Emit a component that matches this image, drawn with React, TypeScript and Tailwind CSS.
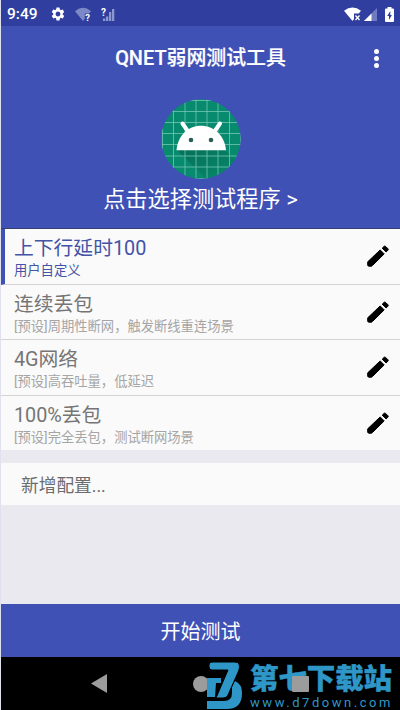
import { MdSettings } from 'react-icons/md';

const profiles = [
  { id: 1, title: '上下行延时100', desc: '用户自定义', active: true },
  { id: 2, title: '连续丢包', desc: '[预设]周期性断网，触发断线重连场景', active: false },
  { id: 3, title: '4G网络', desc: '[预设]高吞吐量，低延迟', active: false },
  { id: 4, title: '100%丢包', desc: '[预设]完全丢包，测试断网场景', active: false },
];

function StatusBar() {
  return (
    <div className="flex h-[26px] shrink-0 items-center bg-[#303f9f] pl-[6px] pr-[6px] pt-[2px] text-white">
      <span className="w-[43px] pt-px text-[15.5px] font-medium leading-none">9:49</span>
      <MdSettings className="h-4 w-4" />
      {/* wifi, unknown */}
      <svg className="ml-[9px] h-[15px] w-4" viewBox="0 0 16 15">
        <path d="M0 4.2Q8-2.6 16 4.2L14 6.5H9.8V11.8L8 14Z" fill="#7d88c6" />
        <text x="10.2" y="14" fontSize="9.5" fontWeight="700" fill="#fff">?</text>
      </svg>
      {/* signal, unknown */}
      <svg className="ml-[10px] h-[15px] w-[14px]" viewBox="0 0 14 15">
        <path d="M2 11.5h2.3v2.5H2zM5 9.5h2.3V14H5zM8 5h2.3v9H8zM11 2h2.3V14H11z" fill="#8c96cf" />
        <text x="0" y="9" fontSize="10" fontWeight="700" fill="#fff">?</text>
      </svg>
      <div className="flex-1" />
      <svg className="h-[15px] w-[17px]" viewBox="0 0 17 15">
        <path d="M0 3.8Q8.5-2.8 17 3.8L14.8 6.6H10V12L8.5 14Z" fill="#fff" />
        <path d="M11.5 8.5l4 4.5M15.5 8.5l-4 4.5" stroke="#fff" strokeWidth="1.3" />
      </svg>
      <svg className="ml-[3px] h-[13px] w-[13px]" viewBox="0 0 13 13">
        <path d="M13 0V13H0Z" fill="#6f7bc0" />
        <path d="M7.5 5.5V13H0Z" fill="#fff" />
      </svg>
      <svg className="ml-[8px] h-[15px] w-[9px]" viewBox="0 0 9 15">
        <path d="M2.5 0h4v1.5H8a1 1 0 0 1 1 1V14a1 1 0 0 1-1 1H1a1 1 0 0 1-1-1V2.5a1 1 0 0 1 1-1h1.5Z" fill="#fff" />
        <path d="M5.3 4L2.2 9H4v4l2.9-5H5.3Z" fill="#303f9f" />
      </svg>
    </div>
  );
}

function AppIcon() {
  return (
    <svg className="h-20 w-20" viewBox="0 0 80 80">
      <defs>
        <clipPath id="circle">
          <circle cx="40" cy="40" r="39.7" />
        </clipPath>
        <linearGradient id="shade" x1="0" y1="0" x2="1" y2="1">
          <stop offset="0" stopColor="#000" stopOpacity="0.2" />
          <stop offset="1" stopColor="#000" stopOpacity="0" />
        </linearGradient>
      </defs>
      <g clipPath="url(#circle)">
        <rect width="80" height="80" fill="#078a6d" />
        <path d="M16 51H64L76 63V80H45Z" fill="url(#shade)" />
        <path
          d="M1.5 0V80M12.5 0V80M24 0V80M35 0V80M46 0V80M57 0V80M68.5 0V80M79.5 0V80M0 1.5H80M0 12.5H80M0 23.5H80M0 34.5H80M0 45.5H80M0 57H80M0 68H80M0 79.5H80"
          stroke="#72c6b4"
          strokeWidth="0.8"
        />
      </g>
      <path d="M21.5 24.5L27 32.5M59 24.5L53.5 32.5" stroke="#fff" strokeWidth="4" strokeLinecap="round" />
      <path d="M15.5 51.3C16.8 36.5 27 26.8 40 26.8S63.7 36.5 65 51.3Z" fill="#fff" />
      <circle cx="30" cy="41" r="2.3" fill="#2c5e58" />
      <circle cx="50" cy="41" r="2.3" fill="#2c5e58" />
    </svg>
  );
}

function EditIcon() {
  return (
    <svg className="h-[22px] w-[22px]" viewBox="0 0 22 22">
      <path
        d="M.7 20.3V16.8L13.2 4.9L17.2 8.9L5.7 20.3L4.5 21.2H1.5ZM15.2 3.2L17 1.4Q17.8.7 18.6 1.4L21 3.8Q21.6 4.4 21 5.1L19.1 7Z"
        fill="#000"
        stroke="#000"
        strokeWidth="1"
        strokeLinejoin="round"
      />
    </svg>
  );
}

function Watermark() {
  return (
    <div className="absolute left-[206px] top-[4px] flex text-[#2e97c8]">
      <svg className="h-[49px] w-[36px]" viewBox="0 0 36 49">
        <path d="M0 17H14V22H9L8 36H0Z" fill="currentColor" />
        <path d="M28 20Q35 23 35 32Q35 48 20 48H0V40H17Q25 40 25 32V26Z" fill="currentColor" />
        <path d="M5 1H28Q34 1 32 9L21 34Q20 37 16 37H9L21 9H5Q2 9 2 6V4Q2 1 5 1Z" fill="currentColor" stroke="#000" strokeWidth="1" />
      </svg>
      <div className="pl-[7px] pt-[4px]">
        <p className="whitespace-nowrap text-[28.5px] font-black leading-[30px] tracking-[-0.1px] [-webkit-text-stroke:0.4px_currentColor]">第七下载站</p>
        <p className="whitespace-nowrap text-[13px] leading-[15px] tracking-[2.55px]">www.d7down.com</p>
      </div>
    </div>
  );
}

export default function App() {
  return (
    <div className="flex h-[710px] w-[400px] flex-col overflow-hidden border-l border-[#dfe1ee] bg-[#e9e9ef] font-[Roboto,'Noto_Sans_CJK_SC',sans-serif]">
      <StatusBar />

      <header className="flex h-[203px] shrink-0 flex-col items-center border-b border-[#37406f] bg-[#3f51b5] text-white">
        <div className="relative flex h-[64px] w-full items-center justify-center">
          <h1 className="pt-[2px] text-[19.9px] font-medium [-webkit-text-stroke:0.2px_currentColor]">QNET弱网测试工具</h1>
          <div className="absolute right-[21px] flex flex-col gap-[2px]">
            <span className="h-[5px] w-[5px] rounded-full bg-white" />
            <span className="h-[5px] w-[5px] rounded-full bg-white" />
            <span className="h-[5px] w-[5px] rounded-full bg-white" />
          </div>
        </div>
        <div className="mt-[9px]">
          <AppIcon />
        </div>
        <p className="mt-[4px] text-[22.2px] leading-[32px]">点击选择测试程序 &gt;</p>
      </header>

      <ul className="shrink-0 bg-[#fafafa]">
        {profiles.map((profile) => (
          <li
            key={profile.id}
            className={
              profile.active
                ? 'flex h-[55.5px] items-center border-b border-l-4 border-b-[#d4d4d6] border-l-[#3f51b5] pl-[9px] pr-[11px] text-[#4353a5]'
                : 'flex h-[55.5px] items-center border-b border-[#d4d4d6] pl-[13px] pr-[11px] text-[#757575] last:h-[54px] last:border-b-0'
            }
          >
            <div className="flex-1 pt-[5px]">
              <p className="text-[19.8px] leading-[25px]">{profile.title}</p>
              <p className={profile.active ? 'text-[13.3px] leading-[20px]' : 'text-[13.3px] leading-[20px] text-[#a5a5a5]'}>
                {profile.desc}
              </p>
            </div>
            <EditIcon />
          </li>
        ))}
      </ul>

      <button className="mt-[13px] flex h-[42px] shrink-0 items-center bg-[#fafafa] pl-[20px] pt-[5px] text-[17.7px] text-[#6c6c6c]">
        新增配置...
      </button>

      <div className="flex-1" />

      <button className="flex h-[53px] shrink-0 items-center justify-center bg-[#3f51b5] pt-[2px] text-[20px] text-white">
        开始测试
      </button>

      <nav className="relative h-[53px] shrink-0 bg-black">
        <Watermark />
        <div className="flex h-full items-center pl-[90px]">
          <svg className="h-[19px] w-[16px]" viewBox="0 0 16 19">
            <path d="M0 9.5L16 0V19Z" fill="#9c9c9c" />
          </svg>
          <span className="ml-[86px] h-4 w-4 rounded-full bg-[#9c9c9c]" />
          <span className="relative ml-[83px] h-4 w-[17px] rounded-[1px] bg-[#9c9c9c]" />
        </div>
      </nav>
    </div>
  );
}
